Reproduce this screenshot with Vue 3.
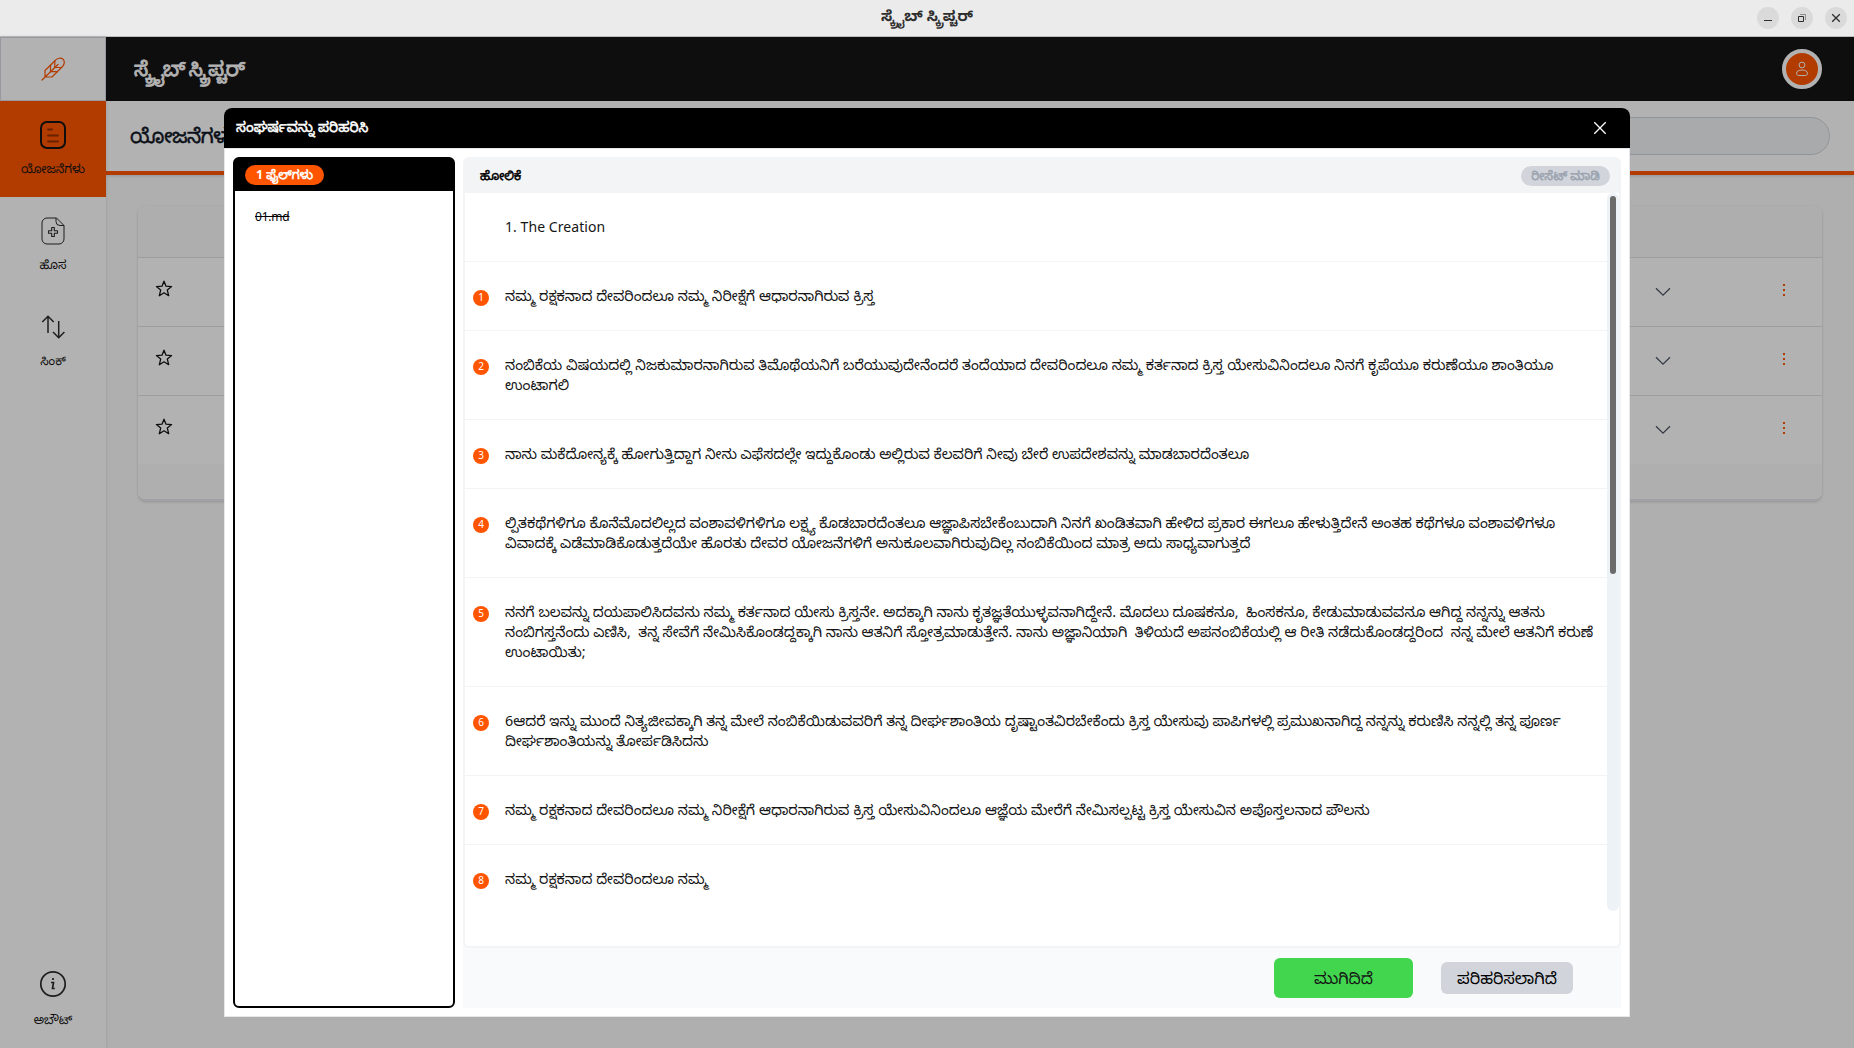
<script setup>
const appName = 'ಸ್ಕ್ರೈಬ್ ಸ್ಕ್ರಿಪ್ಚರ್'

const verses = [
  { lines: ['1. The Creation'] },
  { n: 1, lines: ['ನಮ್ಮ ರಕ್ಷಕನಾದ ದೇವರಿಂದಲೂ ನಮ್ಮ ನಿರೀಕ್ಷೆಗೆ ಆಧಾರನಾಗಿರುವ ಕ್ರಿಸ್ತ'] },
  { n: 2, lines: [
    'ನಂಬಿಕೆಯ ವಿಷಯದಲ್ಲಿ ನಿಜಕುಮಾರನಾಗಿರುವ ತಿಮೊಥೆಯನಿಗೆ ಬರೆಯುವುದೇನೆಂದರೆ ತಂದೆಯಾದ ದೇವರಿಂದಲೂ ನಮ್ಮ ಕರ್ತನಾದ ಕ್ರಿಸ್ತ ಯೇಸುವಿನಿಂದಲೂ ನಿನಗೆ ಕೃಪೆಯೂ ಕರುಣೆಯೂ ಶಾಂತಿಯೂ',
    'ಉಂಟಾಗಲಿ'] },
  { n: 3, lines: ['ನಾನು ಮಕೆದೋನ್ಯಕ್ಕೆ ಹೋಗುತ್ತಿದ್ದಾಗ ನೀನು ಎಫೆಸದಲ್ಲೇ ಇದ್ದುಕೊಂಡು ಅಲ್ಲಿರುವ ಕೆಲವರಿಗೆ ನೀವು ಬೇರೆ ಉಪದೇಶವನ್ನು ಮಾಡಬಾರದೆಂತಲೂ'] },
  { n: 4, lines: [
    'ಲ್ಪಿತಕಥೆಗಳಿಗೂ ಕೊನೆಮೊದಲಿಲ್ಲದ ವಂಶಾವಳಿಗಳಿಗೂ ಲಕ್ಷ್ಯ ಕೊಡಬಾರದೆಂತಲೂ ಆಜ್ಞಾಪಿಸಬೇಕೆಂಬುದಾಗಿ ನಿನಗೆ ಖಂಡಿತವಾಗಿ ಹೇಳಿದ ಪ್ರಕಾರ ಈಗಲೂ ಹೇಳುತ್ತಿದೇನೆ ಅಂತಹ ಕಥೆಗಳೂ ವಂಶಾವಳಿಗಳೂ',
    'ವಿವಾದಕ್ಕೆ ಎಡೆಮಾಡಿಕೊಡುತ್ತದೆಯೇ ಹೊರತು ದೇವರ ಯೋಜನೆಗಳಿಗೆ ಅನುಕೂಲವಾಗಿರುವುದಿಲ್ಲ ನಂಬಿಕೆಯಿಂದ ಮಾತ್ರ ಅದು ಸಾಧ್ಯವಾಗುತ್ತದೆ'] },
  { n: 5, lines: [
    'ನನಗೆ ಬಲವನ್ನು ದಯಪಾಲಿಸಿದವನು ನಮ್ಮ ಕರ್ತನಾದ ಯೇಸು ಕ್ರಿಸ್ತನೇ. ಅದಕ್ಕಾಗಿ ನಾನು ಕೃತಜ್ಞತೆಯುಳ್ಳವನಾಗಿದ್ದೇನೆ. ಮೊದಲು ದೂಷಕನೂ,  ಹಿಂಸಕನೂ, ಕೇಡುಮಾಡುವವನೂ ಆಗಿದ್ದ ನನ್ನನ್ನು ಆತನು',
    'ನಂಬಿಗಸ್ತನೆಂದು ಎಣಿಸಿ,  ತನ್ನ ಸೇವೆಗೆ ನೇಮಿಸಿಕೊಂಡದ್ದಕ್ಕಾಗಿ ನಾನು ಆತನಿಗೆ ಸ್ತೋತ್ರಮಾಡುತ್ತೇನೆ. ನಾನು ಅಜ್ಞಾನಿಯಾಗಿ  ತಿಳಿಯದೆ ಅಪನಂಬಿಕೆಯಲ್ಲಿ ಆ ರೀತಿ ನಡೆದುಕೊಂಡದ್ದರಿಂದ  ನನ್ನ ಮೇಲೆ ಆತನಿಗೆ ಕರುಣೆ',
    'ಉಂಟಾಯಿತು;'] },
  { n: 6, lines: [
    '6ಆದರೆ ಇನ್ನು ಮುಂದೆ ನಿತ್ಯಜೀವಕ್ಕಾಗಿ ತನ್ನ ಮೇಲೆ ನಂಬಿಕೆಯಿಡುವವರಿಗೆ ತನ್ನ ದೀರ್ಘಶಾಂತಿಯ ದೃಷ್ಟಾಂತವಿರಬೇಕೆಂದು ಕ್ರಿಸ್ತ ಯೇಸುವು ಪಾಪಿಗಳಲ್ಲಿ ಪ್ರಮುಖನಾಗಿದ್ದ ನನ್ನನ್ನು ಕರುಣಿಸಿ ನನ್ನಲ್ಲಿ ತನ್ನ ಪೂರ್ಣ',
    'ದೀರ್ಘಶಾಂತಿಯನ್ನು ತೋರ್ಪಡಿಸಿದನು'] },
  { n: 7, lines: ['ನಮ್ಮ ರಕ್ಷಕನಾದ ದೇವರಿಂದಲೂ ನಮ್ಮ ನಿರೀಕ್ಷೆಗೆ ಆಧಾರನಾಗಿರುವ ಕ್ರಿಸ್ತ ಯೇಸುವಿನಿಂದಲೂ ಆಜ್ಞೆಯ ಮೇರೆಗೆ ನೇಮಿಸಲ್ಪಟ್ಟ ಕ್ರಿಸ್ತ ಯೇಸುವಿನ ಅಪೊಸ್ತಲನಾದ ಪೌಲನು'] },
  { n: 8, lines: ['ನಮ್ಮ ರಕ್ಷಕನಾದ ದೇವರಿಂದಲೂ ನಮ್ಮ'] },
]
</script>

<template>
  <div class="window">
    <header class="titlebar">
      <span class="win-title">{{ appName }}</span>
      <div class="win-buttons">
        <span class="win-btn"><svg width="22" height="22" viewBox="0 0 22 22"><path d="M7 13.5h8" stroke="#2e2e2e" /></svg></span>
        <span class="win-btn"><svg width="22" height="22" viewBox="0 0 22 22" fill="none"><path d="M7.5 9.5h5v5h-5z" stroke="#2e2e2e" /><path d="M9 7.5h5.5V13" stroke="#8e8e8e" /></svg></span>
        <span class="win-btn"><svg width="22" height="22" viewBox="0 0 22 22"><path d="M7.2 7.2l7.6 7.6M14.8 7.2l-7.6 7.6" stroke="#2e2e2e" stroke-width="1.3" /></svg></span>
      </div>
    </header>

    <div class="app">
      <aside class="sidebar">
        <div class="logo">
          <svg width="24" height="24" viewBox="0 0 24 24" fill="none" stroke="#ff5500" stroke-width="1.2" stroke-linejoin="round" stroke-linecap="round">
            <path d="M1 23L17 7.500M4 20v-6.500L14.500 3.200C16.500 1 20 .6 22 2.200c2 2 1.500 5.300-.5 7.300L11 20H4" />
            <path d="M9.500 8v6.700M13.800 4v6.500M9.500 14.700h6.700M13.800 10.500h6.700" />
          </svg>
        </div>
        <nav class="nav">
          <a class="nav-item active">
            <svg width="28" height="28" viewBox="0 0 28 28" fill="none" stroke-linecap="round">
              <rect x="2" y="1" width="24" height="26" rx="6" stroke="#151515" stroke-width="2" />
              <path d="M9 8.500h4M9 14.500h10M9 20.500h10" stroke="#993300" stroke-width="2" />
            </svg>
            <span>ಯೋಜನೆಗಳು</span>
          </a>
          <a class="nav-item">
            <svg width="28" height="28" viewBox="0 0 28 28" fill="none" stroke="#2b2b2b" stroke-linejoin="round">
              <path d="M17.500 1H8a5 5 0 0 0-5 5v16a5 5 0 0 0 5 5h12a5 5 0 0 0 5-5V8.500z" />
              <path d="M17 1v3.500a4 4 0 0 0 4 4h4" />
              <path d="M12.700 10.500h2.600v3.200h3.200v2.600h-3.200v3.200h-2.600v-3.200H9.500v-2.600h3.200z" stroke-width="1.100" />
            </svg>
            <span>ಹೊಸ</span>
          </a>
          <a class="nav-item">
            <svg width="28" height="28" viewBox="0 0 28 28" fill="none" stroke="#2b2b2b" stroke-width="1.500">
              <path d="M9 20V3.500M3.300 9L9 3.300 14.700 9M19.700 8v16.500M14 19l5.700 5.700L25.400 19" />
            </svg>
            <span>ಸಿಂಕ್</span>
          </a>
        </nav>
        <a class="nav-item about">
          <svg width="28" height="28" viewBox="0 0 28 28" fill="none" stroke="#2b2b2b">
            <circle cx="14" cy="14" r="12.200" stroke-width="1.700" />
            <path d="M14 8v2M12 12.500h2.500l-1 6h2.300" stroke-width="1.700" />
          </svg>
          <span>ಅಬೌಟ್</span>
        </a>
      </aside>

      <div class="main">
        <div class="topbar">
          <span class="brand heavy">{{ appName }}</span>
          <span class="avatar">
            <svg width="14" height="16" viewBox="0 0 14 16" fill="none" stroke="#ffffff" stroke-width="1">
              <circle cx="7" cy="4" r="2.900" />
              <path d="M1.500 12.200C1.500 10.200 4 9 7 9s5.500 1.200 5.500 3.200c0 1.600-1 2.300-2.300 2.300H3.800c-1.300 0-2.300-.7-2.300-2.300z" />
            </svg>
          </span>
        </div>
        <div class="page-head">
          <h1 class="heavy">ಯೋಜನೆಗಳು</h1>
          <div class="search"></div>
        </div>
        <div class="card">
          <div class="card-head"></div>
          <div v-for="i in 3" :key="i" class="project">
            <svg class="star" width="18" height="18" viewBox="0 0 18 18" fill="none" stroke="#151515" stroke-width="1.300" stroke-linejoin="round">
              <path d="M9 1.200l2 5 5.600.4-4.300 3.500 1.400 5.600L9 12.800l-4.700 2.900 1.400-5.600L1.400 6.600 7 6.200z" />
            </svg>
            <svg class="chevron" width="16" height="10" viewBox="0 0 16 10" fill="none" stroke="#4b5563" stroke-width="1.300"><path d="M1 1.300l7 6.800 7-6.800" /></svg>
            <svg class="dots" width="4" height="14" viewBox="0 0 4 14" fill="#ff5500"><path d="M1 1h2v2H1zM1 6h2v2H1zM1 11h2v2H1z" /></svg>
          </div>
          <div class="card-foot"></div>
        </div>
      </div>
      <div class="overlay"></div>

      <section class="modal">
        <div class="modal-head">
          <span class="heavy">ಸಂಘರ್ಷವನ್ನು ಪರಿಹರಿಸಿ</span>
          <svg width="14" height="14" viewBox="0 0 14 14" stroke="#ffffff" stroke-width="1.300"><path d="M1.300 1.300l11.400 11.400M12.700 1.300L1.300 12.700" /></svg>
        </div>
        <div class="modal-body">
          <div class="files">
            <div class="files-head"><span class="pill"><b>1</b> <span class="heavy">ಫೈಲ್‌ಗಳು</span></span></div>
            <div class="file">01.md</div>
          </div>
          <div class="compare">
            <div class="compare-head">
              <span class="compare-title heavy">ಹೋಲಿಕೆ</span>
              <span class="reset heavy">ರೀಸೆಟ್ ಮಾಡಿ</span>
            </div>
            <div class="compare-box">
              <div class="verses">
                <div v-for="(v, i) in verses" :key="i" class="verse">
                  <span class="num" :class="{ blank: !v.n }">{{ v.n }}</span>
                  <div class="text" :class="{ heading: !v.n }"><div v-for="(l, k) in v.lines" :key="k">{{ l }}</div></div>
                </div>
              </div>
              <div class="track"><div class="thumb"></div></div>
            </div>
            <div class="actions">
              <button class="done">ಮುಗಿದಿದೆ</button>
              <button class="resolved">ಪರಿಹರಿಸಲಾಗಿದೆ</button>
            </div>
          </div>
        </div>
      </section>
    </div>
  </div>
</template>

<style>
body { margin: 0; overflow: hidden; }
</style>

<style scoped>
* { box-sizing: border-box; }
.window {
  width: 1854px; height: 1048px; display: flex; flex-direction: column;
  font-family: "Noto Sans", "Noto Sans Kannada", sans-serif; color: #151515; overflow: hidden;
}
.heavy { font-weight: 400; -webkit-text-stroke: 0.5px currentColor; }
.titlebar {
  height: 37px; flex: none; background: #ebebeb; border-bottom: 1px solid #bdbdbd;
  display: grid; grid-template-columns: 1fr auto 1fr; align-items: center;
}
.win-title { grid-column: 2; font-size: 14.67px; font-weight: 700; color: #2e2e2e; line-height: 30px; height: 36px; white-space: nowrap; }
.win-buttons { display: flex; gap: 12px; justify-content: flex-end; padding-right: 7px; }
.win-btn { width: 22px; height: 22px; border-radius: 50%; background: #dadada; }
.win-btn svg { display: block; }
.app { position: relative; flex: 1; display: flex; background: #fbfbfb; min-height: 0; }
.overlay { position: absolute; inset: 0; background: rgba(0, 0, 0, 0.3); }

.sidebar { width: 106px; flex: none; background: #fff; display: flex; flex-direction: column; box-shadow: 0 0 3px rgba(0, 0, 0, 0.15); z-index: 0; }
.logo { height: 64px; border: 1px solid #d9dbe2; display: flex; align-items: center; justify-content: center; }
.nav { flex: 1; }
.nav-item { height: 96px; display: flex; flex-direction: column; align-items: center; padding-top: 20px; font-size: 12px; line-height: 16px; white-space: nowrap; }
.nav-item svg { flex: none; margin-bottom: 12px; }
.active { background: #ff5500; }
.about { height: 98px; }
.about svg { margin-bottom: 14px; }

.main { flex: 1; min-width: 0; }
.topbar { height: 64px; background: #151515; display: flex; align-items: center; justify-content: space-between; padding: 0 32px 0 28px; }
.brand { color: #fff; font-size: 20px; letter-spacing: -0.95px; margin-top: 3px; white-space: nowrap; -webkit-text-stroke-width: 0.8px; }
.avatar { width: 40px; height: 40px; border-radius: 50%; border: 4px solid #fff; background: #ff5500; display: flex; align-items: center; justify-content: center; }
.page-head { height: 74px; background: #fff; border-bottom: 4px solid #ff5500; display: flex; align-items: center; justify-content: space-between; padding: 0 24px; box-shadow: 0 1px 3px rgba(0, 0, 0, 0.15); }
h1 { margin: 0; font-size: 20px; letter-spacing: -0.5px; line-height: 28px; color: #111827; -webkit-text-stroke-width: 0.9px; }
.search { width: 420px; height: 38px; border-radius: 19px; background: #f3f4f6; border: 1px solid #d1d5db; }
.card { margin: 31px 32px 0; height: 295px; border-radius: 8px; overflow: hidden; background: #fff; box-shadow: 0 1px 3px rgba(0, 0, 0, 0.17); border-bottom: 2px solid #e5e7eb; }
.card-head { height: 52px; background: #f9fafb; border-bottom: 1px solid #e0e1e4; }
.project { height: 69px; display: flex; align-items: center; padding: 0 36px 3px 17px; border-bottom: 1px solid #e0e1e4; }
.project:nth-child(4) { border-bottom-color: #fdfdfd; }
.project .star { margin-top: -3px; }
.chevron { margin-left: auto; margin-right: 111px; margin-top: 2px; }
.dots { margin-top: -1px; }
.card-foot { height: 40px; background: #fbfbfb; }

.modal { position: absolute; left: 224px; top: 71px; width: 1406px; height: 909px; background: #fff; border: 1px solid #e5e7eb; border-top: 0; border-radius: 8px 8px 0 0; }
.modal-head { margin: 0 -1px; height: 40px; background: #000; color: #fff; border-radius: 8px 8px 0 0; display: flex; align-items: center; justify-content: space-between; padding: 0 23px 0 12px; font-size: 14px; }
.modal-head span { margin-top: 1px; }
.modal-body { height: 868px; border-top: 1px solid #e5e7eb; padding: 8px; display: flex; gap: 8px; }
.files { width: 222px; height: 851px; border: 2px solid #000; border-radius: 6px; }
.files-head { height: 32px; background: #000; display: flex; align-items: center; padding-left: 10px; }
.pill { width: 79px; height: 20px; border-radius: 10px; background: #ff5500; color: #fff; font-size: 12.3px; line-height: 20px; text-align: center; white-space: nowrap; }
.file { padding: 16px 20px; font-size: 12px; line-height: 20px; letter-spacing: -0.2px; text-decoration: line-through; color: #000; }
.compare { flex: 1; min-width: 0; display: flex; flex-direction: column; background: #f9fafb; border-radius: 6px 6px 0 0; height: 851px; }
.compare-head { height: 36px; flex: none; background: #f3f4f6; border-radius: 6px 6px 0 0; display: flex; align-items: center; justify-content: space-between; padding: 0 11px 0 17px; font-size: 12.4px; }
.compare-title { line-height: 16px; margin-top: 1px; color: #000; }
.reset { width: 89px; height: 20px; margin-top: 2px; border-radius: 10px; background: #d1d5db; color: #9ca3af; text-align: center; line-height: 20px; white-space: nowrap; }
.compare-box { height: 755px; flex: none; background: #fff; border: 2px solid #f3f4f6; border-top-width: 0; border-radius: 0 0 6px 6px; display: flex; }
.verses { flex: 1; min-width: 0; }
.verse { display: flex; padding: 24px 0 24px 8px; border-bottom: 1px solid #f3f4f6; }
.verse:last-child { border-bottom: 0; }
.num { width: 16px; height: 16px; flex: none; margin: 4px 16px 0 0; border-radius: 50%; background: #ff5500; color: #fff; font-size: 10px; line-height: 15px; text-align: center; }
.num.blank { background: none; }
.text { font-size: 14.33px; line-height: 20px; white-space: pre; color: #151515; }
.text.heading { font-size: 14px; letter-spacing: 0.07px; }
.track { width: 12px; height: 718px; background: #edf2f7; border-radius: 6px; padding: 3px; }
.thumb { width: 6px; height: 378px; border-radius: 3px; background: #6b6b6b; }
.actions { flex: 1; display: flex; align-items: center; justify-content: flex-end; gap: 28px; padding-right: 48px; }
button { border: 0; padding: 3px 0 0; font-family: inherit; font-size: 16px; color: #151515; border-radius: 6px; white-space: nowrap; }
.done { width: 139px; height: 40px; background: #42d64f; }
.resolved { width: 132px; height: 32px; background: #d1d5db; color: #000; }
</style>
